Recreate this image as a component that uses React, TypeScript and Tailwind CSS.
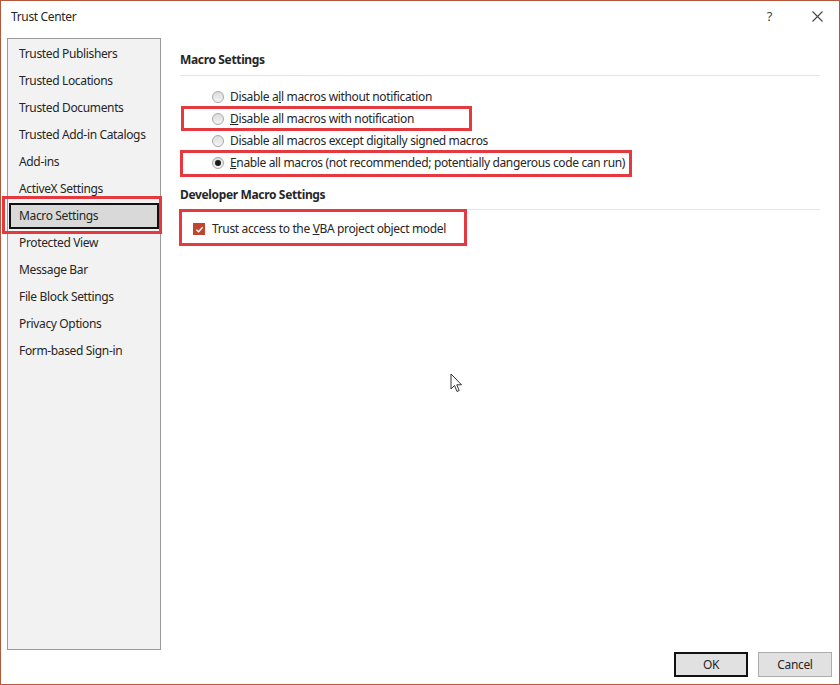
import React from 'react';

const navItems = [
    'Trusted Publishers',
    'Trusted Locations',
    'Trusted Documents',
    'Trusted Add-in Catalogs',
    'Add-ins',
    'ActiveX Settings',
    'Macro Settings',
    'Protected View',
    'Message Bar',
    'File Block Settings',
    'Privacy Options',
    'Form-based Sign-in',
];

function Radio({ checked }: { checked?: boolean }) {
    return (
        <span className="w-[12px] h-[12px] rounded-full border border-[#a8a8a8] bg-gradient-to-b from-[#dcdcdc] to-[#f4f4f4] flex items-center justify-center shrink-0">
            {checked && <span className="w-[6px] h-[6px] rounded-full bg-[#1a1a1a]" />}
        </span>
    );
}

function Checkbox() {
    return (
        <span className="w-[12px] h-[12px] bg-[#c0452f] flex items-center justify-center shrink-0">
            <svg width="9" height="9" viewBox="0 0 10 10">
                <path d="M1.5 5.2 L4 7.5 L8.5 2.5" fill="none" stroke="#fff" strokeWidth="1.6" />
            </svg>
        </span>
    );
}

function Highlight({ className }: { className: string }) {
    return <div className={`absolute border-[3px] border-[#e4393e] pointer-events-none ${className}`} />;
}

export default function App() {
    return (
        <div className="relative w-[840px] h-[685px] bg-white border border-[#b5573a] text-[12px] tracking-[-0.35px] text-[#262626] font-['Noto_Sans',sans-serif] overflow-hidden">
            {/* title bar */}
            <div className="flex items-center h-[31px] pl-[10px] pr-[16px]">
                <span className="flex-1">Trust Center</span>
                <span className="text-[13px] text-[#444] mr-[40px]">?</span>
                <svg width="11" height="11" viewBox="0 0 11 11">
                    <path d="M0.5 0.5 L10.5 10.5 M10.5 0.5 L0.5 10.5" stroke="#444" strokeWidth="1.1" />
                </svg>
            </div>

            <div className="flex mt-[6px]">
                {/* category list */}
                <div className="ml-[6px] w-[154px] h-[612px] border border-[#9a9a9a] bg-[#f2f2f2] pt-[1px]">
                    {navItems.map((item) =>
                        item === 'Macro Settings' ? (
                            <div key={item} className="h-[27px] flex items-center">
                                <div className="mx-[1px] w-full h-[26px] border-2 border-[#111] bg-[#d9d9d9] flex items-center pl-[8px]">
                                    {item}
                                </div>
                            </div>
                        ) : (
                            <div key={item} className="h-[27px] flex items-center pl-[11px]">
                                {item}
                            </div>
                        )
                    )}
                </div>

                {/* settings pane */}
                <div className="ml-[19px] w-[640px]">
                    <div className="h-[37px] flex items-center pt-[7px] font-bold">Macro Settings</div>
                    <div className="h-px bg-[#e6e6e6]" />
                    <div className="pl-[32px] pt-[10px]">
                        <div className="h-[22px] flex items-center gap-[6px]">
                            <Radio />
                            <span>Disable a<u>l</u>l macros without notification</span>
                        </div>
                        <div className="h-[22px] flex items-center gap-[6px]">
                            <Radio />
                            <span><u>D</u>isable all macros with notification</span>
                        </div>
                        <div className="h-[22px] flex items-center gap-[6px]">
                            <Radio />
                            <span>Disable all macros except digitally signed macros</span>
                        </div>
                        <div className="h-[22px] flex items-center gap-[6px]">
                            <Radio checked />
                            <span><u>E</u>nable all macros (not recommended; potentially dangerous code can run)</span>
                        </div>
                    </div>
                    <div className="h-[30px] flex items-center pt-[11px] font-bold">Developer Macro Settings</div>
                    <div className="h-px bg-[#e6e6e6] mt-[5px]" />
                    <div className="pl-[13px] pt-[9px]">
                        <div className="h-[20px] flex items-center gap-[7px]">
                            <Checkbox />
                            <span>Trust access to the <u>V</u>BA project object model</span>
                        </div>
                    </div>
                </div>
            </div>

            {/* dialog buttons */}
            <div className="absolute right-[7px] bottom-[7px] flex gap-[10px]">
                <button className="w-[74px] h-[25px] border-2 border-[#111] bg-[#e1e1e1]">OK</button>
                <button className="w-[74px] h-[25px] border border-[#adadad] bg-[#e1e1e1]">Cancel</button>
            </div>

            {/* annotation boxes */}
            <Highlight className="left-[1px] top-[195px] w-[160px] h-[38px]" />
            <Highlight className="left-[180px] top-[105px] w-[291px] h-[25px]" />
            <Highlight className="left-[179px] top-[149px] w-[452px] h-[27px]" />
            <Highlight className="left-[178px] top-[208px] w-[288px] h-[37px]" />

            {/* mouse pointer */}
            <svg className="absolute left-[449px] top-[372px]" width="14" height="22" viewBox="0 0 14 22">
                <path d="M1 1 L1 16 L4.5 12.5 L7 18.5 L9.2 17.5 L6.8 11.8 L11.5 11.8 Z" fill="#fff" stroke="#333" strokeWidth="1" strokeLinejoin="round" />
            </svg>
        </div>
    );
}
